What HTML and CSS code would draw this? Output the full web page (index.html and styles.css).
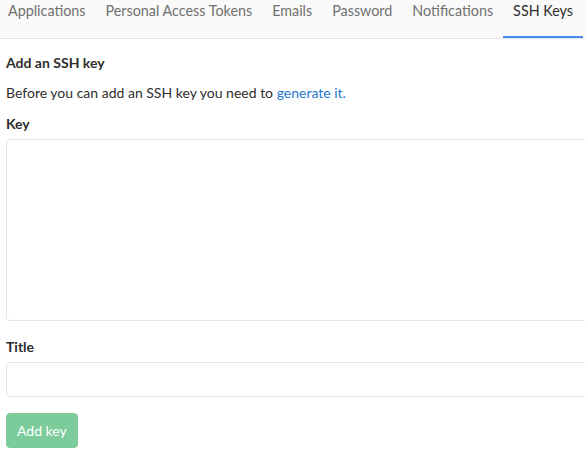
FILE: index.html
```html
<!DOCTYPE html>
<html>
<head>
<meta charset="utf-8">
<link rel="stylesheet" href="styles.css">
</head>
<body>
<div class="page">
  <nav class="tabs">
    <a class="tab">Applications</a>
    <a class="tab">Personal Access Tokens</a>
    <a class="tab">Emails</a>
    <a class="tab">Password</a>
    <a class="tab">Notifications</a>
    <a class="tab active">SSH Keys</a>
  </nav>
  <div class="content">
    <h4 class="heading">Add an SSH key</h4>
    <p class="intro">Before you can add an SSH key you need to <a class="link">generate it.</a></p>
    <label class="label">Key</label>
    <div class="textarea"></div>
    <label class="label title-label">Title</label>
    <div class="input"></div>
    <button class="btn">Add key</button>
  </div>
</div>
</body>
</html>
```

FILE: styles.css
```css
* { box-sizing: border-box; }
html, body { margin: 0; padding: 0; background: #fff; overflow: hidden; }
body { font-family: Lato, "Open Sans", sans-serif; color: #2e2e2e; width: 585px; height: 452px; }
.tabs {
  display: flex;
  height: 39px;
  background: #fafafa;
  border-bottom: 1px solid #e5e5e5;
  margin-left: -2px;
}
.tab {
  height: 38px;
  padding: 1px 10px 0;
  font-size: 14.33px;
  line-height: 19px;
  color: #707070;
  border-bottom: 2px solid transparent;
  white-space: nowrap;
}
.tab.active { color: #2e2e2e; border-bottom-color: #4a8bee; }
.content { padding: 0 6px; }
.heading { margin: 0; padding-top: 14px; font-size: 14px; font-weight: 700; line-height: 20px; color: #2e2e2e; }
.intro { margin: 10px 0 0; font-size: 14px; line-height: 20px; color: #2e2e2e; }
.link { color: #1f78d1; }
.label { display: block; margin-top: 11px; font-size: 14px; font-weight: 700; line-height: 20px; }
.textarea { margin-top: 5px; height: 182px; width: 600px; border: 1px solid #e5e5e5; border-radius: 4px; }
.title-label { margin-top: 16px; }
.input { margin-top: 5px; height: 35px; width: 600px; border: 1px solid #e5e5e5; border-radius: 4px; }
.btn {
  margin-top: 16px;
  height: 35px;
  padding: 0 10px;
  font-family: inherit;
  font-size: 14px;
  color: #fff;
  background: #7ccb9a;
  border: 1px solid #7ccb9a;
  border-radius: 4px;
}
```
